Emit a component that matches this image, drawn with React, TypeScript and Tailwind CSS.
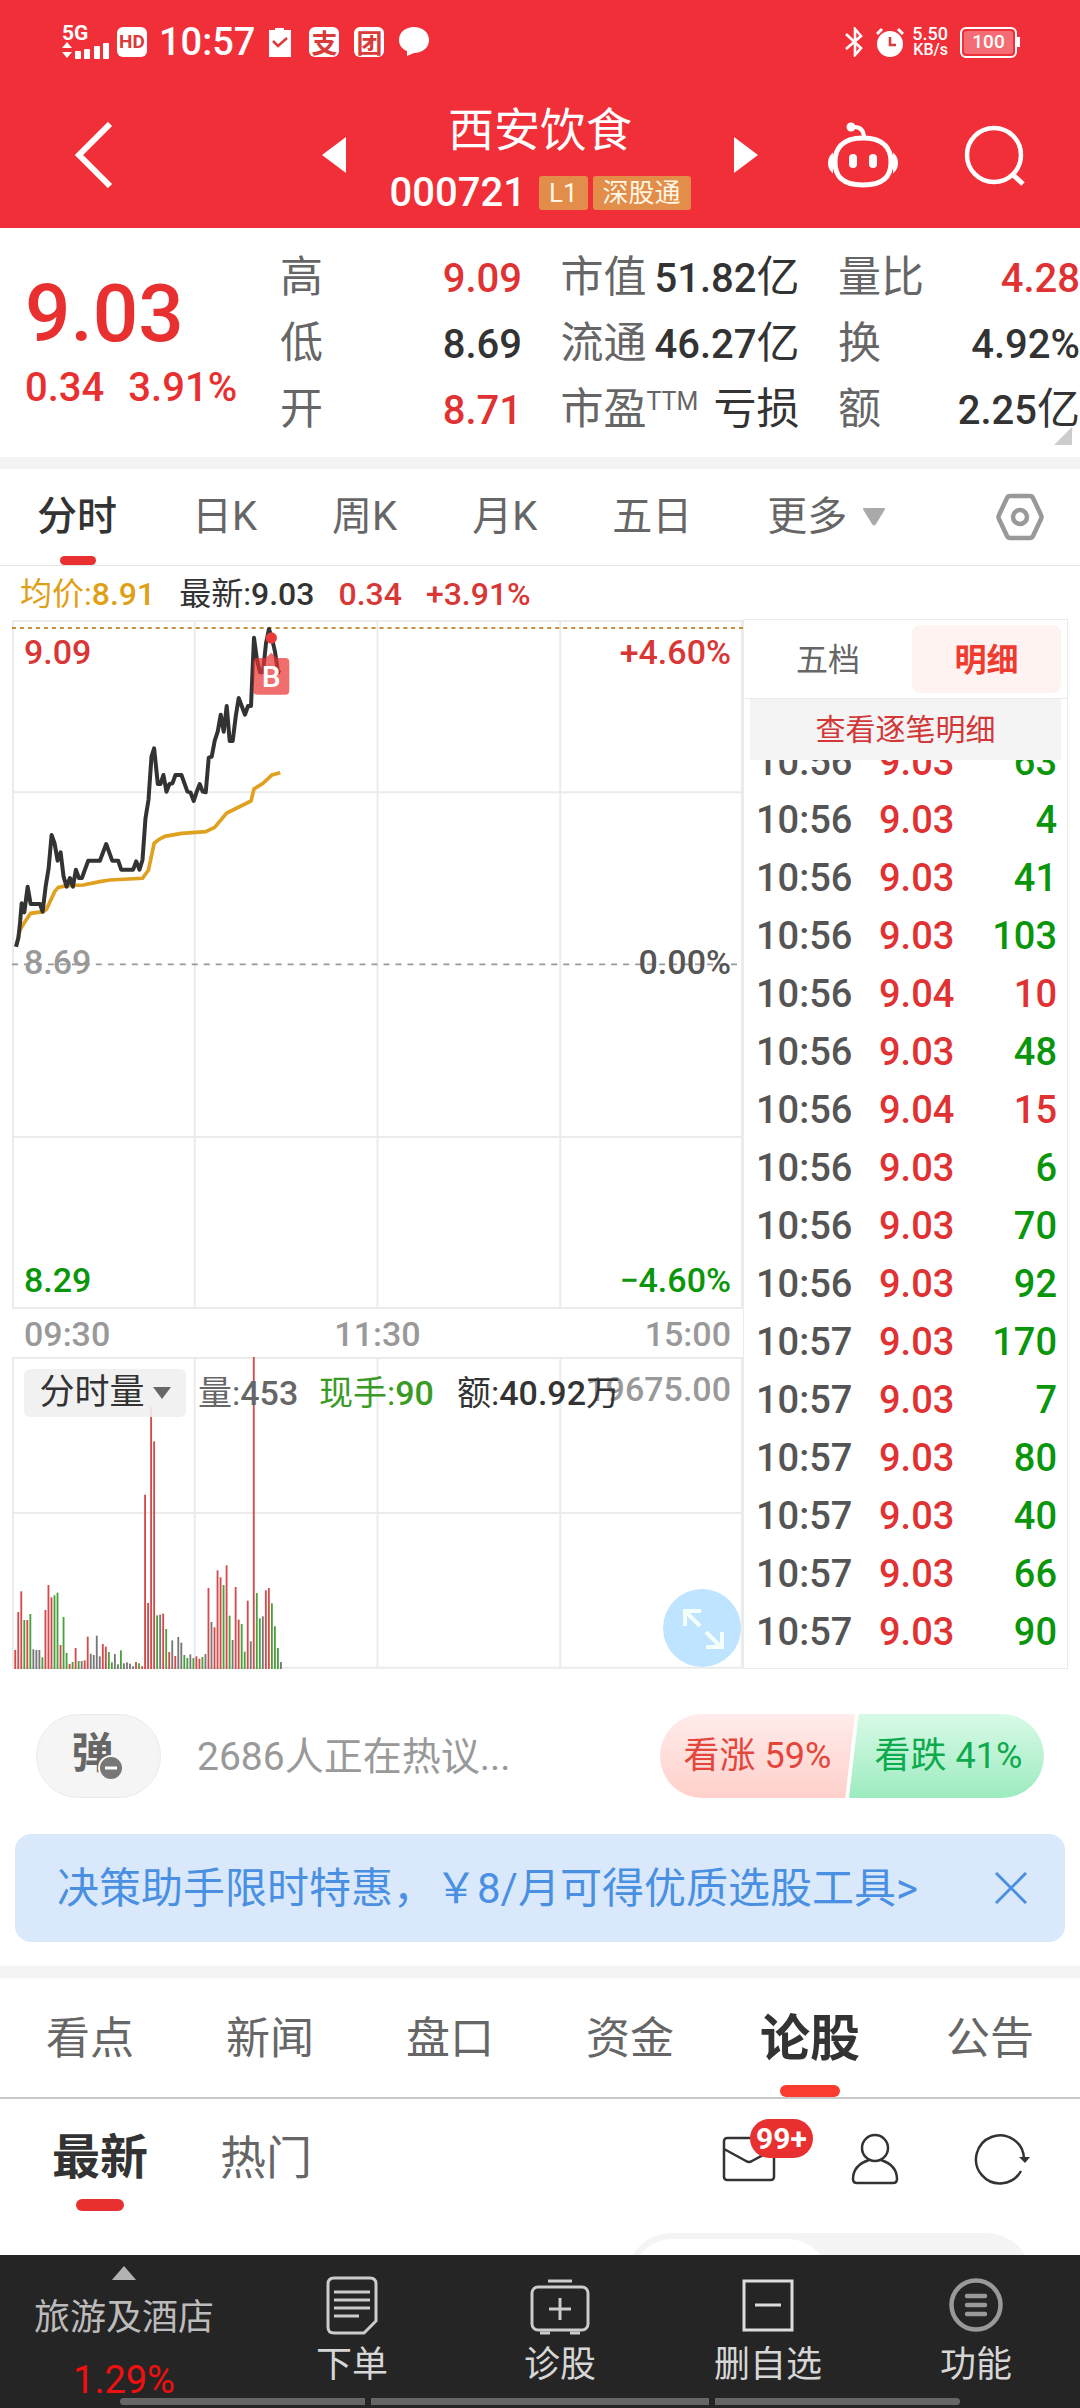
import React from 'react';

const NUM = "font-['Roboto','Noto_Sans_CJK_SC',sans-serif]";

const quotes = [
  [['高', '9.09', 'text-[#e03232]'], ['市值', '51.82亿', 'text-[#333]'], ['量比', '4.28', 'text-[#e03232]']],
  [['低', '8.69', 'text-[#333]'], ['流通', '46.27亿', 'text-[#333]'], ['换', '4.92%', 'text-[#333]']],
  [['开', '8.71', 'text-[#e03232]'], ['市盈', '亏损', 'text-[#333]'], ['额', '2.25亿', 'text-[#333]']],
];

const trades: [string, string, number, boolean][] = [
  ['10:56', '9.03', 63, false],
  ['10:56', '9.03', 4, false],
  ['10:56', '9.03', 41, false],
  ['10:56', '9.03', 103, false],
  ['10:56', '9.04', 10, true],
  ['10:56', '9.03', 48, false],
  ['10:56', '9.04', 15, true],
  ['10:56', '9.03', 6, false],
  ['10:56', '9.03', 70, false],
  ['10:56', '9.03', 92, false],
  ['10:57', '9.03', 170, false],
  ['10:57', '9.03', 7, false],
  ['10:57', '9.03', 80, false],
  ['10:57', '9.03', 40, false],
  ['10:57', '9.03', 66, false],
  ['10:57', '9.03', 90, false],
];

const priceLine =
  '48,1010 55,985 60,940 65,880 73,907 83,830 92,882 120,882 128,905 137,830 146,775 155,675 164,700 173,752 182,727 191,800 200,830 210,804 219,830 228,779 237,804 246,804 265,752 300,752 319,702 337,752 355,752 364,779 400,779 409,754 419,779 428,750 437,625 446,570 455,440 463,415 474,522 482,522 491,495 500,545 509,522 518,520 527,495 545,495 563,545 572,547 582,573 591,545 600,522 609,545 618,547 627,443 636,440 645,392 654,365 663,314 672,365 681,288 690,393 699,393 708,320 717,264 736,314 745,288 754,288 763,83 772,150 781,187 790,187 799,100 808,57 817,85 826,125 835,185 842,188';
const averageLine =
  '48,1010 60,960 75,935 92,910 130,905 140,897 164,845 175,832 200,827 250,825 300,815 330,810 428,805 446,780 463,700 475,690 495,679 545,670 618,665 645,652 681,609 736,582 754,573 763,537 790,520 817,495 842,488';

const volumes =
  'r1170 r1056 r994 g1080 r1080 g1062 k1168 k1170 k1170 g1192 r1050 r975 r1012 g1006 g998 r1155 g1071 g1179 r1212 g1206 r1164 g1203 k1203 r1201 r1130 k1181 k1185 k1127 k1189 r1152 r1160 g1176 g1207 k1182 k1213 g1171 k1210 k1207 k1211 k1219 r1206 g1210 r1219 r704 r1029 r441 r544 g1066 k1064 r1061 g1107 r1176 k1141 r1188 k1131 k1148 g1185 g1194 k1183 g1194 r1189 r1196 g1191 k1182 r984 k1086 r1102 r931 r952 g975 r916 g1067 k1140 r981 r1079 g1092 g1175 r1022 k1144 r291 g999 g1075 k1069 r991 r984 g1030 g1099 g1164 k1206'.split(
    ' ',
  );
const barColor: Record<string, string> = { r: '#d44a4a', g: '#4aa13c', k: '#777777' };

function StatusBar() {
  return (
    <div className="flex h-[84px] items-center justify-between pl-[62px] pr-[60px] font-['Roboto',sans-serif] text-white">
      <div className="flex items-center">
        <div className="flex h-[34px] w-[48px] flex-col justify-between">
          <span className="text-[21px] font-bold leading-[16px]">5G</span>
          <svg viewBox="0 0 48 18" className="h-[18px] w-[48px]" fill="#fff">
            <path d="M5 1 10 7H0ZM5 17 10 11H0Z" />
            <rect x="13" y="10" width="6" height="8" rx="1" />
            <rect x="22" y="8" width="6" height="10" rx="1" />
            <rect x="32" y="5" width="6" height="13" rx="1" />
            <rect x="41" y="2" width="6" height="16" rx="1" />
          </svg>
        </div>
        <span className="ml-[7px] flex h-[30px] w-[30px] items-center justify-center rounded-[6px] bg-white text-[19px] font-bold text-[#d93a3a]">HD</span>
        <span className="ml-3 text-[38px] font-medium leading-[40px]">10:57</span>
        <svg viewBox="0 0 22 30" className="ml-[14px] h-[30px] w-[22px]">
          <path d="M0 3h6V1h9v2h7v27H0Z" fill="#fff" />
          <path d="m4 14 5 5 9-8" fill="none" stroke="#d93a3a" strokeWidth="2.5" />
        </svg>
        <span className="ml-[18px] flex h-[30px] w-[30px] items-center justify-center rounded-[6px] bg-white font-['Noto_Sans_CJK_SC',sans-serif] text-[26px] font-bold leading-[30px] text-[#d93a3a]">支</span>
        <span className="ml-[15px] flex h-[30px] w-[30px] items-center justify-center rounded-[6px] bg-white font-['Noto_Sans_CJK_SC',sans-serif] text-[26px] font-bold leading-[30px] text-[#d93a3a]">团</span>
        <svg viewBox="0 0 30 30" className="ml-[15px] h-[30px] w-[30px]">
          <path d="M15 0c8 0 15 5 15 13s-7 13-15 13l-7 3V24C3 22 0 18 0 13 0 5 7 0 15 0Z" fill="#fff" />
        </svg>
      </div>
      <div className="flex items-center">
        <svg viewBox="0 0 18 30" className="h-[30px] w-[18px]" fill="none" stroke="#fff" strokeWidth="2.6">
          <path d="m1 7 15 14-6 7V2l6 7L1 22" />
        </svg>
        <svg viewBox="0 0 28 30" className="ml-[13px] h-[30px] w-[28px]">
          <circle cx="14" cy="17" r="13" fill="#fff" />
          <path d="m1 7 5-5M27 7l-5-5" stroke="#fff" strokeWidth="3" />
          <path d="M14 10v8h6" fill="none" stroke="#d93a3a" strokeWidth="2.6" />
        </svg>
        <div className="ml-2 flex flex-col items-end text-[18px] font-medium leading-[16px]">
          <span>5.50</span>
          <span className="text-[16px]">KB/s</span>
        </div>
        <div className="ml-3 flex h-[31px] w-[57px] rounded-[6px] border-2 border-white p-[2px]">
          <span className="flex flex-1 items-center justify-center rounded-[3px] bg-white/30 text-[19px] font-medium">100</span>
        </div>
        <span className="h-[10px] w-[3px] bg-white" />
      </div>
    </div>
  );
}

function Header() {
  return (
    <header className="h-[228px] bg-[#f12f38]">
      <StatusBar />
      <div className="grid grid-cols-[1fr_auto_1fr] items-start px-[54px] text-white">
        <div className="flex h-[142px] items-center justify-between">
          <button aria-label="返回" className="p-5">
            <svg viewBox="0 0 40 66" className="h-[66px] w-[40px]" fill="none" stroke="#fff" strokeWidth="6">
              <path d="M36 2 5 33l31 31" />
            </svg>
          </button>
          <button aria-label="上一只">
            <svg viewBox="0 0 24 36" className="h-[36px] w-[24px]" fill="#fff"><path d="M24 0v36L0 18Z" /></svg>
          </button>
        </div>
        <div className="flex w-[388px] flex-col items-center pt-[6px]">
          <h1 className="text-[46px] leading-[80px]">西安饮食</h1>
          <div className="flex h-[46px] items-center gap-[5px]">
            <span className={`${NUM} mr-2 text-[40px] font-medium leading-[46px]`}>000721</span>
            <span className="rounded-[3px] bg-[#e28d49] px-[10px] text-[26px] leading-[34px] text-[#fff6e4]">L1</span>
            <span className="rounded-[3px] bg-[#e28d49] px-[10px] text-[26px] leading-[34px] text-[#fff6e4]">深股通</span>
          </div>
        </div>
        <div className="flex h-[142px] items-center justify-between">
          <button aria-label="下一只">
            <svg viewBox="0 0 24 36" className="h-[36px] w-[24px]" fill="#fff"><path d="M0 0v36l24-18Z" /></svg>
          </button>
          <button aria-label="智能助手" className="ml-[4px]">
            <svg viewBox="0 0 70 66" className="h-[66px] w-[70px]" fill="none" stroke="#fff" strokeWidth="5">
              <path d="M35 16c22 0 28 12 28 24s-5 23-28 23S7 52 7 40s6-24 28-24Z" />
              <path d="M36 16c0-7-3-11-10-11" strokeWidth="4" />
              <circle cx="23" cy="5" r="4.500" fill="#fff" stroke="none" />
              <path d="M25 36v6M45 36v6" strokeWidth="8" strokeLinecap="round" />
              <path d="M4 33c-4 4-4 12 0 16zM66 33c4 4 4 12 0 16z" fill="#fff" strokeWidth="2" />
            </svg>
          </button>
          <button aria-label="搜索">
            <svg viewBox="0 0 62 62" className="h-[62px] w-[62px]" fill="none" stroke="#fff" strokeWidth="4.500">
              <circle cx="30" cy="31" r="27" />
              <path d="m48 50 11 10" strokeWidth="5" />
            </svg>
          </button>
        </div>
      </div>
    </header>
  );
}

function Quote() {
  return (
    <section className="relative flex h-[229px] text-[#666]">
      <div className={`${NUM} w-[280px] pl-[25px] pt-[42px] font-medium text-[#e93030]`}>
        <div className="text-[80px] leading-[88px]">9.03</div>
        <div className="flex gap-6 text-[40px] leading-[60px]">
          <span>0.34</span>
          <span>3.91%</span>
        </div>
      </div>
      <dl className="grid flex-1 grid-cols-[242px_239px_242px] content-start justify-between pt-[16px] text-[43px] leading-[66px]">
        {quotes.flat().map(([label, value, color]) => (
          <div key={label} className="flex h-[66px] justify-between whitespace-nowrap">
            <dt>
              {label}
              {label === '市盈' && <sup className="relative -top-[14px] text-[25px] leading-none">TTM</sup>}
            </dt>
            <dd className={`${NUM} ${color}`}>
              <span className="text-[40px] font-medium">{value.replace(/[亿亏损]/g, '')}</span>
              {value.replace(/[\d.%]/g, '')}
            </dd>
          </div>
        ))}
      </dl>
      <svg viewBox="0 0 18 18" className="absolute bottom-3 right-2 h-[18px] w-[18px]" fill="#ccc"><path d="M18 0v18H0Z" /></svg>
    </section>
  );
}

function PeriodTabs() {
  return (
    <nav className="flex h-[97px] items-center gap-[75px] border-b border-[#e5e5e5] pl-[37px] pr-9 text-[40px] text-[#666]">
      <button className="relative flex h-full items-center font-medium text-[#333]">
        分时
        <span className="absolute bottom-0 left-[23px] h-[9px] w-[36px] rounded-full bg-[#e93030]" />
      </button>
      <button>日K</button>
      <button>周K</button>
      <button>月K</button>
      <button>五日</button>
      <button className="flex items-center gap-4">
        更多
        <svg viewBox="0 0 22 18" className="h-[18px] w-[22px]" fill="#aaa"><path d="M1 0h20q2 0 0 3l-8 13q-2 3-4 0L1 3q-2-3 0-3Z" /></svg>
      </button>
      <button aria-label="设置" className="ml-auto">
        <svg viewBox="0 0 48 48" className="h-[48px] w-[48px]" fill="none" stroke="#999" strokeWidth="4.500" strokeLinejoin="round">
          <path d="M14 3h20q2 0 3 2l8 17q1 2 0 4l-8 17q-1 2-3 2H14q-2 0-3-2L3 26q-1-2 0-4l8-17q1-2 3-2Z" />
          <circle cx="24" cy="24" r="7" />
        </svg>
      </button>
    </nav>
  );
}

function PriceChart() {
  return (
    <div className={`${NUM} relative text-[34px] font-medium leading-[40px]`}>
      <svg viewBox="36 30 2196 2067" preserveAspectRatio="none" className="block h-[689px] w-full" fill="none">
        <path d="M36 33H2232M36 547H2232M36 1581H2232M36 2094H2232M39 33V2094M585 33V2094M1134 33V2094M1683 33V2094M2229 33V2094" stroke="#ebebeb" strokeWidth="6" />
        <path d="M36 54H2232" stroke="#c8923c" strokeWidth="6" strokeDasharray="12 12" />
        <path d="M36 1063H2232" stroke="#999" strokeWidth="5" strokeDasharray="18 18" />
        <polyline points={averageLine} stroke="#e0a020" strokeWidth="11" />
        <polyline points={priceLine} stroke="#333" strokeWidth="12" strokeLinejoin="round" />
        <circle cx="815" cy="84" r="17" fill="#e83a3a" />
        <path d="M773 144h25l17-16 17 16h25q12 0 12 12v86q0 12-12 12H773q-12 0-12-12v-86q0-12 12-12Z" fill="#e93030" fillOpacity=".7" />
        <text x="815" y="231" textAnchor="middle" fontFamily="Roboto" fontSize="90" fill="#fff">B</text>
      </svg>
      <span className="absolute left-3 top-3 text-[#d93636]">9.09</span>
      <span className="absolute right-3 top-3 text-[#d93636]">+4.60%</span>
      <span className="absolute left-3 top-[322px] text-[#999]">8.69</span>
      <span className="absolute right-3 top-[322px] text-[#555]">0.00%</span>
      <span className="absolute bottom-[9px] left-3 text-[#0a960a]">8.29</span>
      <span className="absolute bottom-[9px] right-3 text-[#0a960a]">−4.60%</span>
    </div>
  );
}

function VolumeChart() {
  return (
    <div className={`${NUM} relative text-[34px] leading-[48px]`}>
      <svg viewBox="36 291 2196 936" preserveAspectRatio="none" className="block h-[312px] w-full">
        <path d="M36 294H2232M36 759H2232M36 1223H2232M39 294V1223M585 294V1223M1134 294V1223M1683 294V1223M2229 294V1223" stroke="#ebebeb" strokeWidth="6" />
        {volumes.map((v, i) => (
          <rect key={i} x={43 + i * 9.07} y={Number(v.slice(1))} width="5.500" height={1227 - Number(v.slice(1))} fill={barColor[v[0]]} />
        ))}
      </svg>
      <span className="absolute right-3 top-2 font-medium text-[#999]">19675.00</span>
      <div className="absolute left-3 top-3 flex items-center whitespace-nowrap">
        <button className="flex h-[48px] w-[162px] items-center justify-center gap-2 rounded-[6px] bg-[#f0f0f0]/90 text-[35px] text-[#333]">
          分时量
          <svg viewBox="0 0 18 12" className="h-[12px] w-[18px]" fill="#666"><path d="M0 0h18L9 12Z" /></svg>
        </button>
        <span className="ml-3 w-[121px] text-[#666]">量:<b className="font-medium">453</b></span>
        <span className="w-[138px] text-[#3a9a26]">现手:<b className="font-medium">90</b></span>
        <span className="text-[#333]">额:<b className="font-medium">40.92</b>万</span>
      </div>
      <button aria-label="全屏" className="absolute bottom-[2px] right-[2px] h-[78px] w-[78px] rounded-full bg-[#bfe4ff]">
        <svg viewBox="0 0 78 78" className="h-full w-full" fill="none" stroke="#f4fffa" strokeWidth="4">
          <path d="M22 37V22h16M23 23l14 14M43 43l15 15M59 43v15H43" />
        </svg>
      </button>
    </div>
  );
}

function TradeList() {
  return (
    <aside className="flex h-[1050px] w-[325px] shrink-0 flex-col border border-[#ebebeb]">
      <div className="flex h-[79px] shrink-0 items-center border-b border-[#ebebeb] pr-[6px] text-[32px] text-[#666]">
        <button className="flex-1 pt-[2px]">五档</button>
        <button className="h-[68px] w-[149px] rounded-[8px] bg-[#fff3f1] pt-[2px] font-bold text-[#f03c30]">明细</button>
      </div>
      <button className="mx-[6px] h-[61px] shrink-0 bg-[#f4f4f4] text-[30px] text-[#d23838]">查看逐笔明细</button>
      <div className="flex min-h-0 flex-1 flex-col justify-end overflow-hidden pb-[7px] pl-3 pr-[10px]">
        <table className={`${NUM} w-full table-fixed text-[38px] font-medium leading-[58px]`}>
          <tbody>
            {trades.map(([time, price, count, up], i) => (
              <tr key={i} className="h-[58px]">
                <td className="w-[123px] p-0 text-[#555]">{time}</td>
                <td className="w-[90px] p-0 text-[#e03232]">{price}</td>
                <td className={up ? 'p-0 text-right text-[#e03232]' : 'p-0 text-right text-[#0a960a]'}>{count}</td>
              </tr>
            ))}
          </tbody>
        </table>
      </div>
    </aside>
  );
}

function ChartArea() {
  return (
    <section>
      <div className={`${NUM} flex h-[53px] items-center gap-[24px] pl-5 pt-1 text-[32px] leading-[49px] text-[#d93636]`}>
        <span className="text-[#e0a016]">均价:<b className="font-medium">8.91</b></span>
        <span className="text-[#333]">最新:<b className="font-medium">9.03</b></span>
        <b className="font-medium">0.34</b>
        <b className="font-medium">+3.91%</b>
      </div>
      <div className="flex px-3">
        <div className="min-w-0 flex-1 pt-px">
          <PriceChart />
          <div className={`${NUM} flex h-[48px] items-center justify-between px-3 pt-[2px] text-[34px] font-medium text-[#999]`}>
            <span>09:30</span>
            <span>11:30</span>
            <span>15:00</span>
          </div>
          <VolumeChart />
        </div>
        <TradeList />
      </div>
    </section>
  );
}

function Discussion() {
  return (
    <section className="flex h-[84px] items-center px-9">
      <button aria-label="弹幕" className="relative h-[84px] w-[125px] rounded-full border border-[#ebebeb] bg-[#f5f5f5] pb-1 pr-3 text-[42px] font-bold text-[#666]">
        弹
        <svg viewBox="0 0 26 26" className="absolute bottom-[16px] right-[36px] h-[26px] w-[26px]">
          <circle cx="13" cy="13" r="12" fill="#777" stroke="#f5f5f5" strokeWidth="2" />
          <path d="M7 13h12" stroke="#fff" strokeWidth="3" />
        </svg>
      </button>
      <span className="ml-9 pt-[2px] text-[39px] text-[#999]">2686人正在热议...</span>
      <div className="ml-auto flex h-[84px] text-[36px]">
        <button className="w-[195px] rounded-l-full bg-linear-to-b from-[#ffecea] to-[#ffd0cb] text-[#e5463c] [clip-path:polygon(0_0,100%_0,95%_100%,0_100%)]">看涨 59%</button>
        <button className="-ml-[6px] w-[195px] rounded-r-full bg-linear-to-b from-[#d8fae7] to-[#9cebbf] pl-1 text-[#0eaa4e] [clip-path:polygon(5%_0,100%_0,100%_100%,0_100%)]">看跌 41%</button>
      </div>
    </section>
  );
}

function ContentTabs() {
  return (
    <nav className="grid h-[121px] grid-cols-6 border-b-2 border-[#c8c8c8] text-[44px] text-[#666]">
      {['看点', '新闻', '盘口', '资金', '论股', '公告'].map((t) =>
        t === '论股' ? (
          <button key={t} className="relative pt-1 text-[50px] font-bold text-[#333]">
            {t}
            <span className="absolute bottom-0 left-1/2 h-[12px] w-[60px] -translate-x-1/2 rounded-full bg-[#fb3b30]" />
          </button>
        ) : (
          <button key={t} className="pt-1">{t}</button>
        ),
      )}
    </nav>
  );
}

function Feed() {
  return (
    <section className="h-[156px] overflow-hidden">
      <div className="flex h-[134px] items-start pl-[52px] pr-[50px]">
        <button className="flex h-[112px] flex-col items-center justify-between text-[48px] font-bold text-[#333]">
          <span className="h-[100px] leading-[117px]">最新</span>
          <span className="h-[12px] w-[48px] shrink-0 rounded-full bg-[#e93030]" />
        </button>
        <button className="ml-[72px] text-[46px] leading-[118px] text-[#666]">热门</button>
        <div className="ml-auto flex h-[120px] items-center">
          <button aria-label="消息" className="relative">
            <svg viewBox="0 0 54 46" className="h-[46px] w-[54px]" fill="none" stroke="#333" strokeWidth="2.500">
              <rect x="2" y="2" width="50" height="42" rx="3" />
              <path d="m2 13 22 12q3 2 6 0l22-12" />
            </svg>
            <span className="absolute -top-[17px] left-[28px] flex h-[39px] w-[63px] items-center justify-center rounded-full bg-[#e93030] text-[30px] font-bold text-white">99+</span>
          </button>
          <button aria-label="我的" className="ml-[75px]">
            <svg viewBox="0 0 48 52" className="h-[52px] w-[48px]" fill="none" stroke="#333" strokeWidth="2.500">
              <circle cx="24" cy="15" r="13" />
              <path d="M18 27C6 31 2 39 2 46q0 4 4 4h36q4 0 4-4c0-7-4-15-16-19" />
            </svg>
          </button>
          <button aria-label="刷新" className="ml-[75px]">
            <svg viewBox="0 0 56 52" className="h-[52px] w-[56px]" fill="none" stroke="#333" strokeWidth="2.500">
              <path d="M47 38A24 24 0 1 1 50 26" />
              <path d="M45 24h11l-5 6Z" fill="#333" stroke="none" />
            </svg>
          </button>
        </div>
      </div>
      <div className="ml-auto mr-[48px] h-[92px] w-[406px] rounded-full bg-[#f4f4f4] p-[6px]">
        <div className="h-[80px] w-[196px] rounded-full bg-white" />
      </div>
    </section>
  );
}

function BottomNav() {
  return (
    <footer className="relative flex h-[153px] bg-[#252525] text-[36px] text-[#d6d6d6]">
      <button className="flex w-[248px] flex-col items-center pt-[11px] text-[#bbb]">
        <svg viewBox="0 0 26 15" className="h-[15px] w-[26px]" fill="#b3b3b3"><path d="M13 0 26 15H0Z" /></svg>
        <span className="mt-[10px] leading-[56px]">旅游及酒店</span>
        <span className="mt-[6px] font-['Roboto',sans-serif] text-[38px] leading-[56px] text-[#f01010]">1.29%</span>
      </button>
      <div className="grid flex-1 grid-cols-4">
        <button className="flex flex-col items-center pt-5">
          <svg viewBox="0 0 52 60" className="h-[60px] w-[52px]" fill="none" stroke="#ccc" strokeWidth="3">
            <path d="M8 3h36q6 0 6 6v37L38 58H8q-6 0-6-6V9q0-6 6-6ZM8 17h36M8 25h36M8 33h36M8 41h25" />
          </svg>
          <span className="mt-1 leading-[52px]">下单</span>
        </button>
        <button className="flex flex-col items-center pt-5">
          <svg viewBox="0 0 60 60" className="h-[60px] w-[60px]" fill="none" stroke="#ccc" strokeWidth="3">
            <rect x="2" y="12" width="56" height="43" rx="6" />
            <path d="M18 6h24M19 34h22M30 23v22M10 58h10M40 58h10" />
          </svg>
          <span className="mt-1 leading-[52px]">诊股</span>
        </button>
        <button className="flex flex-col items-center pt-5">
          <svg viewBox="0 0 52 60" className="h-[60px] w-[52px]" fill="none" stroke="#ddd" strokeWidth="3">
            <path d="M2 6h48v49H2ZM13 30h26" />
          </svg>
          <span className="mt-1 leading-[52px]">删自选</span>
        </button>
        <button className="flex flex-col items-center pt-5">
          <svg viewBox="0 0 54 60" className="h-[60px] w-[54px]" fill="none" stroke="#999" strokeWidth="4.500" strokeLinecap="round">
            <circle cx="27" cy="30" r="24.500" />
            <path d="M18 21h18M18 30h18M18 39h18" />
          </svg>
          <span className="mt-1 leading-[52px]">功能</span>
        </button>
      </div>
      <div className="absolute inset-x-[120px] bottom-[3px] flex h-[7px] gap-[6px]">
        <span className="w-[245px] rounded-l-full bg-[#666]" />
        <span className="flex-1 bg-[#666]" />
        <span className="w-[245px] rounded-r-full bg-[#666]" />
      </div>
    </footer>
  );
}

export default function App() {
  return (
    <div className="w-full bg-white font-['Roboto','Noto_Sans_CJK_SC',sans-serif] leading-tight">
      <Header />
      <Quote />
      <div className="h-3 bg-[#f4f4f4]" />
      <PeriodTabs />
      <ChartArea />
      <div className="pt-[45px]">
        <Discussion />
      </div>
      <div className="mx-[15px] mb-6 mt-9 flex h-[108px] items-center justify-between rounded-[16px] bg-[#dae8fb] pl-[42px] pr-[38px] text-[42px] text-[#4a90e2]">
        <a href="#offer" className="pt-[2px]">决策助手限时特惠，￥8/月可得优质选股工具&gt;</a>
        <button aria-label="关闭">
          <svg viewBox="0 0 32 32" className="h-[32px] w-[32px]" fill="none" stroke="#4a90e2" strokeWidth="3"><path d="m1 1 30 30M31 1 1 31" /></svg>
        </button>
      </div>
      <div className="h-3 bg-[#f4f4f4]" />
      <ContentTabs />
      <Feed />
      <BottomNav />
    </div>
  );
}
